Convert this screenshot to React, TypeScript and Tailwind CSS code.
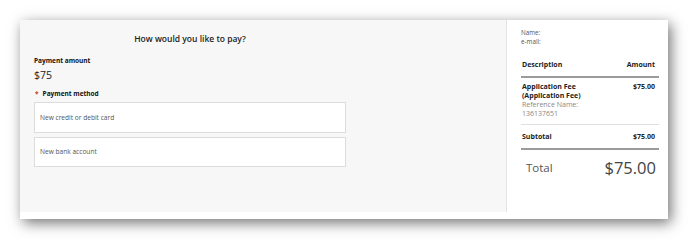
import React from "react";

export default function App() {
  return (
    <div
      className="w-[689px] h-[240px] bg-white relative"
      style={{ fontFamily: '"Open Sans", "Liberation Sans", sans-serif' }}
    >
      <div className="absolute left-[20px] top-[20px] w-[648px] h-[199px] bg-white shadow-[3px_4px_13px_rgba(0,0,0,0.55)] flex items-start">
        <div className="w-[487px] h-[192px] bg-[#f7f7f7] border-r border-[#e4e4e4] pl-[14px] pt-[12px]">
          <div className="w-[312px]">
            <div className="text-center text-[8.5px] leading-[14px] font-semibold text-[#222]">
              How would you like to pay?
            </div>
            <div className="mt-[10px] text-[6.5px] leading-[10px] font-bold text-[#111]">
              Payment amount
            </div>
            <div className="mt-[2px] text-[10.5px] leading-[14px] text-[#222]">$75</div>
            <div className="mt-[7px] flex items-center text-[6.5px] leading-[10px] font-bold text-[#111]">
              <span className="text-[#c0392b] mr-[4px] pl-[1px]">*</span>
              <span>Payment method</span>
            </div>
            <div className="mt-[3px] h-[31px] bg-white border border-[#dcdcdc] flex items-center pl-[5px] text-[6.6px] text-[#555]">
              New credit or debit card
            </div>
            <div className="mt-[4px] h-[30px] bg-white border border-[#dcdcdc] flex items-center pl-[5px] text-[6.6px] text-[#555]">
              New bank account
            </div>
          </div>
        </div>
        <div className="flex-1 pl-[14px] pr-[9px] pt-[8px]">
          <div className="text-[6.3px] leading-[9px] text-[#555]">
            <div>Name:</div>
            <div>e-mail:</div>
          </div>
          <div className="mt-[14px] flex justify-between px-[1px] pb-[6px] border-b-2 border-[#9a9a9a] text-[7px] leading-[10px] font-bold text-[#222]">
            <span>Description</span>
            <span className="pr-[3px]">Amount</span>
          </div>
          <div className="pt-[4px] pb-[6px] flex justify-between px-[1px] border-b border-[#e0e0e0] text-[7px] leading-[9px]">
            <div>
              <div className="font-bold text-[#222]">Application Fee</div>
              <div className="font-bold text-[#222]">(Application Fee)</div>
              <div className="text-[#888]">Reference Name:</div>
              <div className="text-[#888]">136137651</div>
            </div>
            <div className="font-bold text-[#222] pr-[3px]">$75.00</div>
          </div>
          <div className="pt-[7px] pb-[7px] flex justify-between px-[1px] border-b-2 border-[#9a9a9a] text-[7px] leading-[9px] font-bold text-[#222]">
            <span>Subtotal</span>
            <span className="pr-[3px]">$75.00</span>
          </div>
          <div className="mt-[6px] flex justify-between items-center pl-[5px] pr-[3px]">
            <span className="text-[11.5px] text-[#555]">Total</span>
            <span className="text-[16.5px] text-[#444] leading-[24px]">$75.00</span>
          </div>
        </div>
      </div>
    </div>
  );
}
